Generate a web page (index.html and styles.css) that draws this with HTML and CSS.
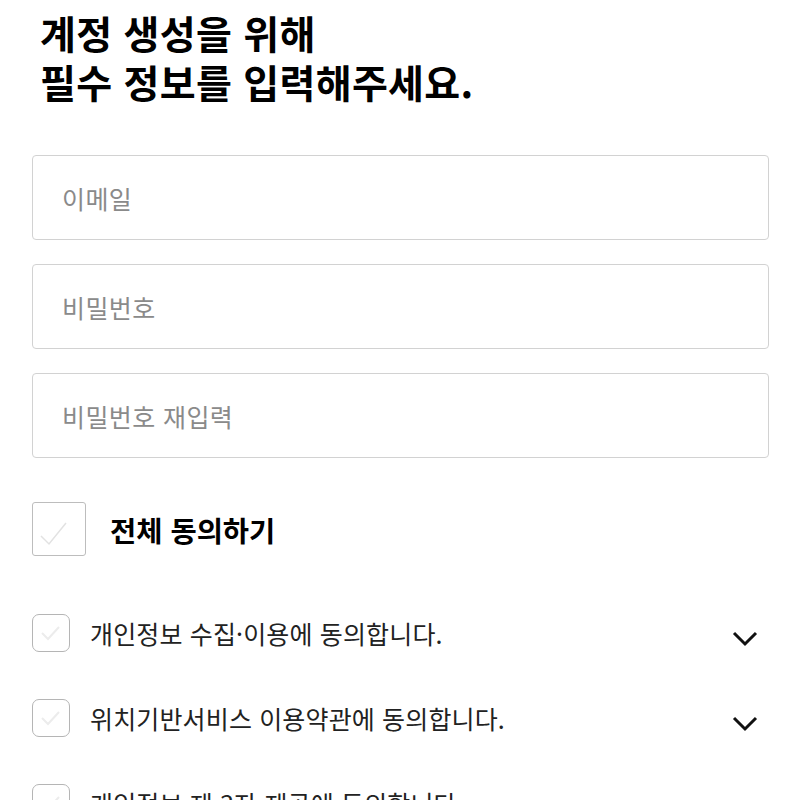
FILE: index.html
```html
<!DOCTYPE html>
<html lang="ko">
<head>
<meta charset="utf-8">
<link rel="stylesheet" href="styles.css">
</head>
<body>
<main class="page">
  <h1 class="title"><span class="title-line">계정 생성을 위해</span><span class="title-line">필수 정보를 입력해주세요.</span></h1>

  <div class="fields">
    <div class="field">이메일</div>
    <div class="field">비밀번호</div>
    <div class="field">비밀번호 재입력</div>
  </div>

  <div class="all-agree">
    <span class="box box-lg">
      <svg viewBox="0 0 54 54" width="54" height="54"><path d="M9 34 L17 42 L34 21" fill="none" stroke="#e2e2e2" stroke-width="1.5"/></svg>
    </span>
    <span class="all-label">전체 동의하기</span>
  </div>

  <ul class="terms">
    <li class="term">
      <span class="box box-sm">
        <svg viewBox="0 0 38 38" width="38" height="38"><path d="M10 19 L16 25 L27 13" fill="none" stroke="#ececec" stroke-width="2"/></svg>
      </span>
      <span class="term-label">개인정보 수집·이용에 동의합니다.</span>
      <svg class="chev" viewBox="0 0 26 16" width="26" height="16"><path d="M2 2 L13 13 L24 2" fill="none" stroke="#111" stroke-width="3"/></svg>
    </li>
    <li class="term">
      <span class="box box-sm">
        <svg viewBox="0 0 38 38" width="38" height="38"><path d="M10 19 L16 25 L27 13" fill="none" stroke="#ececec" stroke-width="2"/></svg>
      </span>
      <span class="term-label">위치기반서비스 이용약관에 동의합니다.</span>
      <svg class="chev" viewBox="0 0 26 16" width="26" height="16"><path d="M2 2 L13 13 L24 2" fill="none" stroke="#111" stroke-width="3"/></svg>
    </li>
    <li class="term">
      <span class="box box-sm">
        <svg viewBox="0 0 38 38" width="38" height="38"><path d="M10 19 L16 25 L27 13" fill="none" stroke="#ececec" stroke-width="2"/></svg>
      </span>
      <span class="term-label">개인정보 제 3자 제공에 동의합니다.</span>
      <svg class="chev" viewBox="0 0 26 16" width="26" height="16"><path d="M2 2 L13 13 L24 2" fill="none" stroke="#111" stroke-width="3"/></svg>
    </li>
  </ul>
</main>
</body>
</html>
```

FILE: styles.css
```css
html, body {
  margin: 0;
  padding: 0;
  background: #fff;
}
body {
  font-family: "Noto Sans CJK KR", "Noto Sans", sans-serif;
  color: #111;
}
.page {
  padding: 8px 31px 0 32px;
  display: flex;
  flex-direction: column;
}
.title {
  margin: 0 0 0 8px;
  font-size: 39px;
  line-height: 49px;
  font-weight: 700;
  letter-spacing: 0.3px;
  color: #000;
  display: flex;
  flex-direction: column;
}
.title-line {
  display: block;
  height: 49px;
}
.fields {
  margin-top: 49px;
  display: flex;
  flex-direction: column;
  gap: 24px;
}
.field {
  box-sizing: border-box;
  height: 85px;
  border: 1.5px solid #d2d2d2;
  border-radius: 4px;
  padding-left: 29px;
  display: flex;
  align-items: center;
  font-size: 25px;
  color: #8a8a8a;
  letter-spacing: 0.4px;
}
.all-agree {
  margin-top: 44px;
  display: flex;
  align-items: center;
  gap: 24px;
}
.box {
  box-sizing: border-box;
  display: block;
  flex: none;
  position: relative;
  background: #fff;
}
.box svg {
  position: absolute;
  left: -1.5px;
  top: -1.5px;
}
.box-lg {
  width: 54px;
  height: 54px;
  border: 1.5px solid #bdbdbd;
  border-radius: 3px;
}
.all-label {
  font-size: 28.5px;
  font-weight: 700;
  color: #000;
  letter-spacing: 0;
}
.terms {
  list-style: none;
  margin: 58px 0 0;
  padding: 0;
  display: flex;
  flex-direction: column;
  gap: 47px;
}
.term {
  display: flex;
  align-items: center;
  height: 38px;
}
.box-sm {
  width: 38px;
  height: 38px;
  border: 1.5px solid #b5b5b5;
  border-radius: 7px;
}
.term-label {
  margin-left: 20px;
  flex: 1;
  font-size: 25px;
  color: #222;
  letter-spacing: 0.15px;
}
.chev {
  flex: none;
  margin-right: 11px;
  margin-top: 12px;
}
```
